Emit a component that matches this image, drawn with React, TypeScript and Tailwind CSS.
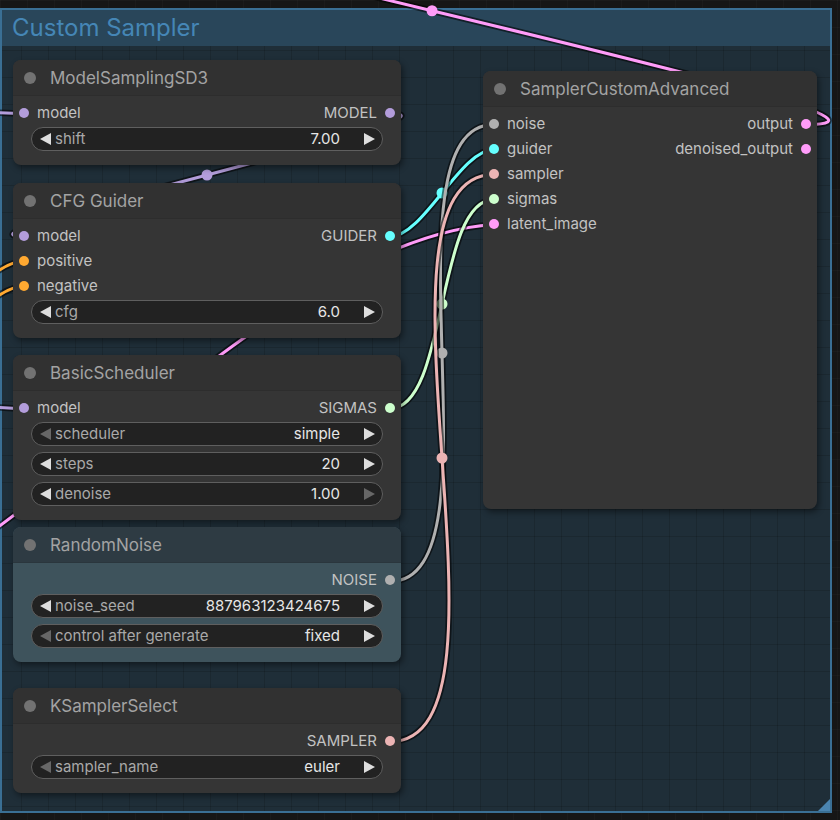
import React from 'react';

type Pt = [number, number];

const TYPE = {
  model: '#b39ddb',
  cond: '#ffa931',
  latent: '#ff9cf9',
  guider: '#66ffff',
  sampler: '#ecb4b4',
  sigmas: '#cdffcd',
  noise: '#b0b0b0',
};

// litegraph style spline: control points pushed out by a quarter of the distance
function spline(a: Pt, b: Pt) {
  const c = Math.hypot(b[0] - a[0], b[1] - a[1]) * 0.25;
  return `M ${a[0]} ${a[1]} C ${a[0] + c} ${a[1]}, ${b[0] - c} ${b[1]}, ${b[0]} ${b[1]}`;
}

interface Link {
  from: Pt;
  to: Pt;
  color: string;
  marker?: boolean;
  path?: string;
}

const links: Link[] = [
  { from: [-420, 60], to: [24, 113.5], color: TYPE.model },
  { from: [-420, 330], to: [24, 408.5], color: TYPE.model },
  { from: [-150, 420], to: [24, 261.5], color: TYPE.cond },
  { from: [-150, 445], to: [24, 286.5], color: TYPE.cond },
  {
    from: [-20, 540],
    to: [494, 224.5],
    color: TYPE.latent,
    path: 'M -20 540 C 150 420, 330 235, 494 224.5',
  },
  { from: [806, 124.5], to: [58, -103], color: TYPE.latent, marker: true },
  { from: [390, 113.5], to: [24, 236.5], color: TYPE.model, marker: true },
  { from: [390, 236.5], to: [494, 149.5], color: TYPE.guider, marker: true },
  { from: [390, 408.5], to: [494, 199.5], color: TYPE.sigmas, marker: true },
  { from: [390, 581.5], to: [494, 124.5], color: TYPE.noise, marker: true },
  { from: [390, 741.5], to: [494, 174.5], color: TYPE.sampler, marker: true },
];

interface Slot {
  label: string;
  color: string;
}

interface WidgetDef {
  label: string;
  value: string;
  leftOff?: boolean;
  rightOff?: boolean;
}

function Arrow({ dir, off }: { dir: 'left' | 'right'; off?: boolean }) {
  return (
    <svg width="11" height="12" viewBox="0 0 11 12" className="shrink-0">
      <polygon
        points={dir === 'left' ? '11,0 11,12 0,6' : '0,0 0,12 11,6'}
        fill={off ? '#676767' : '#dedede'}
      />
    </svg>
  );
}

function Widget({ label, value, leftOff, rightOff }: WidgetDef) {
  return (
    <div className="flex h-[24px] items-center rounded-full border border-[#5f5f5f] bg-[#222222] pl-[8px] pr-[7px]">
      <Arrow dir="left" off={leftOff} />
      <span className="ml-[4px] whitespace-nowrap text-[15px] leading-[18px] text-[#a9a9a9]">{label}</span>
      <span className="ml-auto mr-[24px] whitespace-nowrap text-[15px] leading-[18px] text-[#e6e6e6]">{value}</span>
      <Arrow dir="right" off={rightOff} />
    </div>
  );
}

function Dot({ color }: { color: string }) {
  return <span className="h-[10px] w-[10px] shrink-0 rounded-full" style={{ backgroundColor: color }} />;
}

interface NodeProps {
  pos: string;
  title: string;
  slate?: boolean;
  inputs?: Slot[];
  outputs?: Slot[];
  widgets?: WidgetDef[];
}

function GraphNode({ pos, title, slate, inputs = [], outputs = [], widgets = [] }: NodeProps) {
  const rows = Math.max(inputs.length, outputs.length);
  return (
    <div
      className={`absolute flex flex-col overflow-hidden rounded-lg shadow-[2px_3px_6px_rgba(0,0,0,0.45)] ${
        slate ? 'bg-[#3e535c]' : 'bg-[#353535]'
      } ${pos}`}
    >
      <div
        className={`flex h-[36px] shrink-0 items-center gap-[14px] border-b pl-[11px] ${
          slate ? 'border-[#2a363d] bg-[#2e3b43]' : 'border-[#2d2d2d] bg-[#313131]'
        }`}
      >
        <span className="h-[12px] w-[12px] rounded-full bg-[#727272]" />
        <span className="text-[17px] leading-[20px] text-[#a3a3a3]">{title}</span>
      </div>
      <div className="flex flex-col pt-[4px]">
        {Array.from({ length: rows }).map((_, i) => (
          <div key={i} className="flex h-[25px] items-center justify-between px-[6px]">
            <div className="flex items-center gap-[8px]">
              {inputs[i] && (
                <>
                  <Dot color={inputs[i].color} />
                  <span className="text-[15px] leading-[18px] text-[#c2c2c2]">{inputs[i].label}</span>
                </>
              )}
            </div>
            <div className="flex items-center gap-[8px]">
              {outputs[i] && (
                <>
                  <span className="text-[15px] leading-[18px] text-[#c2c2c2]">{outputs[i].label}</span>
                  <Dot color={outputs[i].color} />
                </>
              )}
            </div>
          </div>
        ))}
      </div>
      {widgets.length > 0 && (
        <div className="mt-[2px] flex flex-col gap-[6px] px-[18px] pb-[14px]">
          {widgets.map((w) => (
            <Widget key={w.label} {...w} />
          ))}
        </div>
      )}
    </div>
  );
}

export default function App() {
  return (
    <div className="relative h-[820px] w-[840px] overflow-hidden bg-[#161616] bg-[linear-gradient(rgba(255,255,255,0.025)_1px,transparent_1px),linear-gradient(90deg,rgba(255,255,255,0.025)_1px,transparent_1px)] bg-[size:27px_27px] font-['Inter','Noto_Sans',sans-serif]">
      {/* group */}
      <div className="absolute left-0 top-[8px] flex h-[805px] w-[832px] flex-col border-2 border-[#3a6f94]">
        <div className="flex h-[36px] shrink-0 items-center bg-[#29465a] pl-[10px]">
          <span className="text-[24px] leading-[28px] text-[#4586b6]">Custom Sampler</span>
        </div>
        <div className="relative flex-1 bg-[#1f2e38] bg-[linear-gradient(rgba(0,0,0,0.14)_1px,transparent_1px),linear-gradient(90deg,rgba(0,0,0,0.14)_1px,transparent_1px)] bg-[size:27px_27px] bg-[position:19px_4px]">
          <svg width="12" height="12" viewBox="0 0 12 12" className="absolute bottom-0 right-0">
            <polygon points="12,0 12,12 0,12" fill="#4a84b0" />
          </svg>
        </div>
      </div>

      {/* links */}
      <svg width="840" height="820" className="pointer-events-none absolute inset-0">
        {links.map((l, i) => {
          const d = l.path ?? spline(l.from, l.to);
          return (
            <g key={i}>
              <path d={d} fill="none" stroke="rgba(0,0,0,0.55)" strokeWidth="6.5" strokeLinecap="round" />
              <path d={d} fill="none" stroke={l.color} strokeWidth="3" strokeLinecap="round" />
              {l.marker && (
                <circle cx={(l.from[0] + l.to[0]) / 2} cy={(l.from[1] + l.to[1]) / 2} r="5.5" fill={l.color} />
              )}
            </g>
          );
        })}
      </svg>

      {/* nodes */}
      <GraphNode
        pos="left-[13px] top-[60px] w-[388px]"
        title="ModelSamplingSD3"
        inputs={[{ label: 'model', color: TYPE.model }]}
        outputs={[{ label: 'MODEL', color: TYPE.model }]}
        widgets={[{ label: 'shift', value: '7.00' }]}
      />
      <GraphNode
        pos="left-[13px] top-[183px] w-[388px]"
        title="CFG Guider"
        inputs={[
          { label: 'model', color: TYPE.model },
          { label: 'positive', color: TYPE.cond },
          { label: 'negative', color: TYPE.cond },
        ]}
        outputs={[{ label: 'GUIDER', color: TYPE.guider }]}
        widgets={[{ label: 'cfg', value: '6.0' }]}
      />
      <GraphNode
        pos="left-[13px] top-[355px] w-[388px]"
        title="BasicScheduler"
        inputs={[{ label: 'model', color: TYPE.model }]}
        outputs={[{ label: 'SIGMAS', color: TYPE.sigmas }]}
        widgets={[
          { label: 'scheduler', value: 'simple', leftOff: true },
          { label: 'steps', value: '20' },
          { label: 'denoise', value: '1.00', rightOff: true },
        ]}
      />
      <GraphNode
        pos="left-[13px] top-[527px] w-[388px]"
        title="RandomNoise"
        slate
        outputs={[{ label: 'NOISE', color: TYPE.noise }]}
        widgets={[
          { label: 'noise_seed', value: '887963123424675' },
          { label: 'control after generate', value: 'fixed', leftOff: true },
        ]}
      />
      <GraphNode
        pos="left-[13px] top-[688px] w-[388px]"
        title="KSamplerSelect"
        outputs={[{ label: 'SAMPLER', color: TYPE.sampler }]}
        widgets={[{ label: 'sampler_name', value: 'euler', leftOff: true }]}
      />
      <GraphNode
        pos="left-[483px] top-[71px] w-[334px] h-[438px]"
        title="SamplerCustomAdvanced"
        inputs={[
          { label: 'noise', color: TYPE.noise },
          { label: 'guider', color: TYPE.guider },
          { label: 'sampler', color: TYPE.sampler },
          { label: 'sigmas', color: TYPE.sigmas },
          { label: 'latent_image', color: TYPE.latent },
        ]}
        outputs={[
          { label: 'output', color: TYPE.latent },
          { label: 'denoised_output', color: TYPE.latent },
        ]}
      />
    </div>
  );
}
